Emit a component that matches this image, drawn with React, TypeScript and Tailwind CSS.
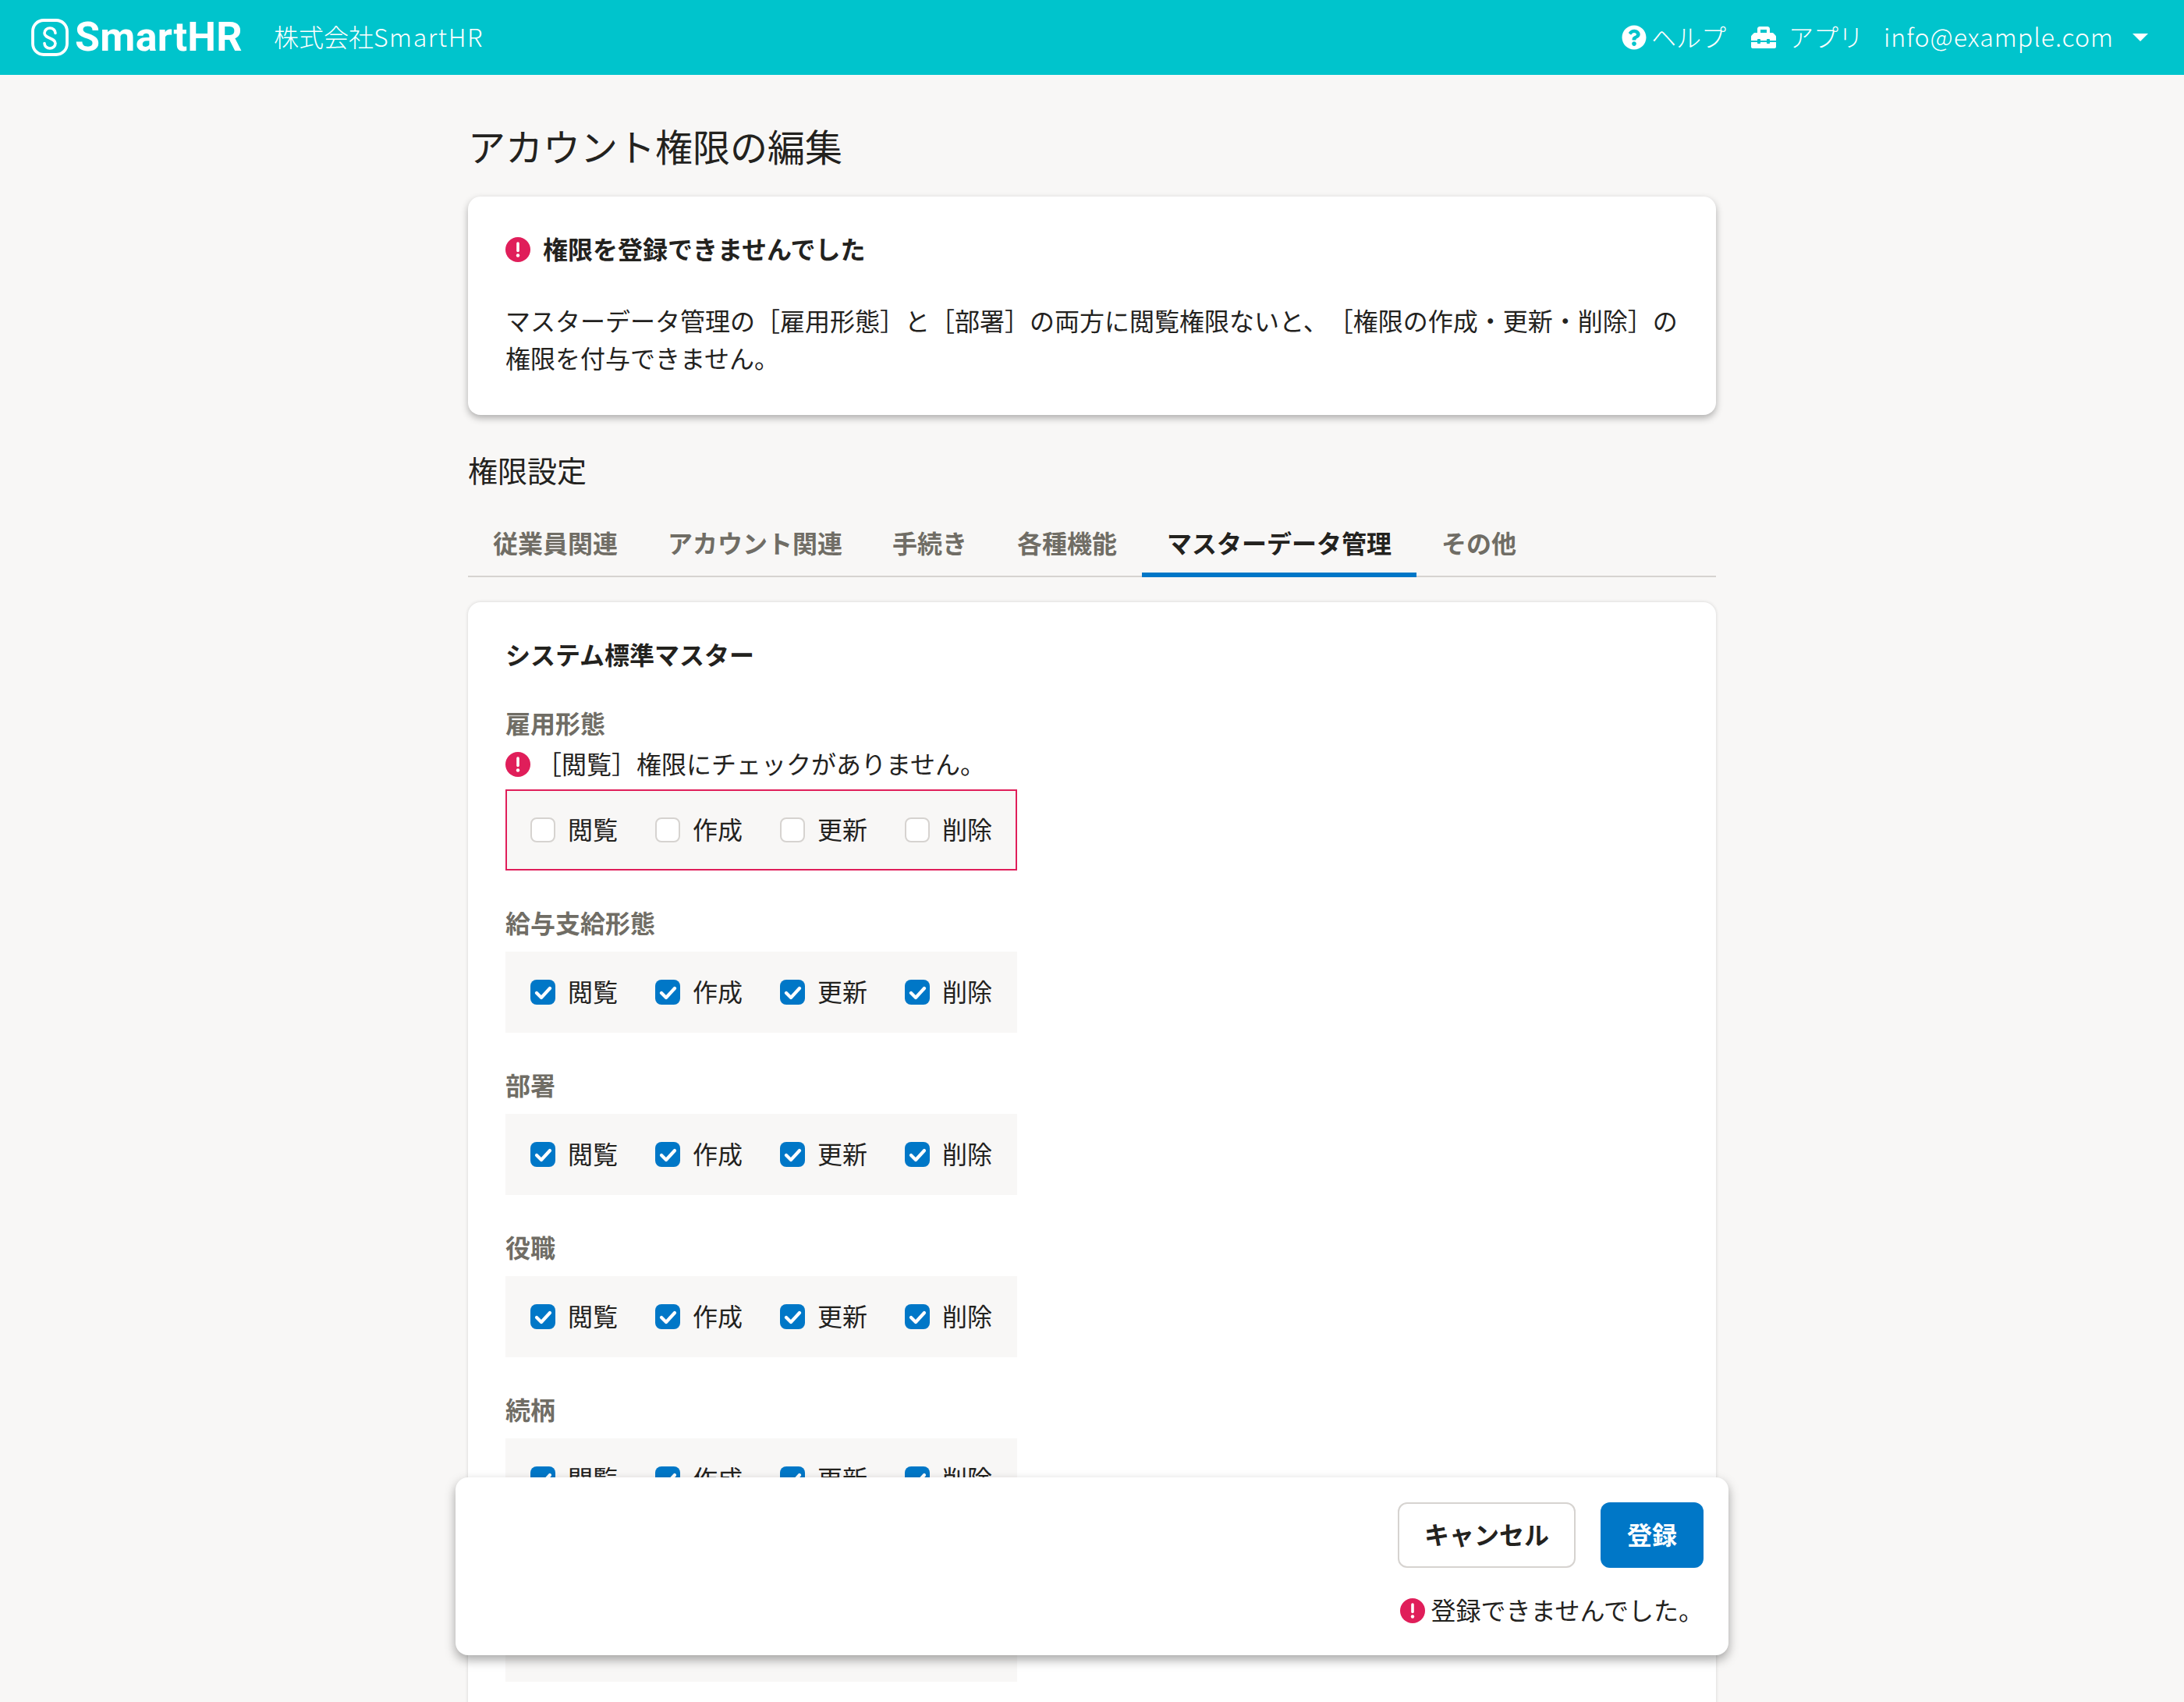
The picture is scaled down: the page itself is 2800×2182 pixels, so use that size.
import React from "react";
import { FaQuestionCircle, FaToolbox } from "react-icons/fa";

const JP = '"Noto Sans CJK JP", sans-serif';

function ErrorIcon() {
  return (
    <svg viewBox="0 0 32 32" className="w-8 h-8 shrink-0">
      <circle cx="16" cy="16" r="16" fill="#e01e5a" />
      <path d="M16 8v9.5" stroke="#fff" strokeWidth="3.6" strokeLinecap="round" />
      <circle cx="16" cy="23.5" r="2.2" fill="#fff" />
    </svg>
  );
}

function Check({ label, on }: { label: string; on: boolean }) {
  return (
    <label className="flex items-center gap-4 h-8">
      {on ? (
        <span className="flex w-8 h-8 items-center justify-center rounded-lg bg-[#0077c7]">
          <svg viewBox="0 0 32 32" className="w-8 h-8" fill="none">
            <path d="M8 17l6 6L25 11" stroke="#fff" strokeWidth="4.2" strokeLinecap="round" strokeLinejoin="round" />
          </svg>
        </span>
      ) : (
        <span className="block w-8 h-8 rounded-lg border-2 border-[#d6d3d0] bg-white" />
      )}
      <span className="text-[32px] leading-10 pb-1 w-16 text-[#23221e]">{label}</span>
    </label>
  );
}

function Group({ on }: { on: boolean }) {
  return (
    <div className="flex gap-12">
      {["閲覧", "作成", "更新", "削除"].map((l) => (
        <Check key={l} label={l} on={on} />
      ))}
    </div>
  );
}

function Section({ title, tall }: { title: string; tall?: boolean }) {
  return (
    <section className="mt-12">
      <h3 className="h-10 text-[32px] leading-9 font-bold text-[#706d65] mb-4">{title}</h3>
      <div className={`w-[656px] bg-[#f8f7f6] px-8 py-9 ${tall ? "h-[312px]" : "h-[104px]"}`}>
        <Group on />
      </div>
    </section>
  );
}

const tabs = ["従業員関連", "アカウント関連", "手続き", "各種機能", "マスターデータ管理", "その他"];

export default function App() {
  return (
    <div className="relative h-[2182px] overflow-hidden bg-[#f8f7f6] text-[#23221e]" style={{ fontFamily: JP }}>
      <header className="flex h-24 items-center justify-between bg-[#00c4cc] pl-10 pr-[46px] text-white">
        <div className="flex items-center">
          <svg viewBox="0 0 48 48" className="w-12 h-12" fill="none" stroke="#fff">
            <rect x="2" y="2" width="44" height="44" rx="14" strokeWidth="3.8" />
            <path d="M31 18.5a7 6.5 0 0 0-14 0c0 3.5 3.5 5 7 6.5s7 3 7 6.5a7 6.5 0 0 1-14 0" strokeWidth="3.6" strokeLinecap="round" />
          </svg>
          <span className="ml-[8px] text-[52px] leading-none font-bold tracking-[0.3px]" style={{ fontFamily: "Roboto, sans-serif" }}>SmartHR</span>
          <span className="ml-10 pb-1 text-[32px] leading-10 font-light">株式会社<span className="tracking-[1.6px]">SmartHR</span></span>
        </div>
        <div className="flex items-center text-[32px] leading-10 font-light">
          <FaQuestionCircle className="w-8 h-8" />
          <span className="ml-[6px] pb-1">ヘルプ</span>
          <FaToolbox className="w-8 h-8 ml-8" />
          <span className="ml-4 pb-1">アプリ</span>
          <span className="ml-[26px] pb-1 tracking-[1.05px]">info@example.com</span>
          <svg viewBox="0 0 20 10" className="ml-6 w-5 h-[10px]"><path d="M0 0h20L10 10z" fill="#fff" /></svg>
        </div>
      </header>

      <main className="mx-auto w-[1600px]">
        <h1 className="mt-[60px] mb-9 text-[48px] leading-[60px]">アカウント権限の編集</h1>

        <div className="rounded-2xl bg-white p-12 shadow-[0_4px_10px_rgba(0,0,0,0.3)]">
          <div className="flex items-center gap-4 h-10 mb-[46px]">
            <ErrorIcon />
            <h2 className="pb-1 text-[32px] leading-10 font-bold">権限を登録できませんでした</h2>
          </div>
          <p className="pb-[2px] text-[32px] leading-12 [text-spacing-trim:space-all]">
            マスターデータ管理の［雇用形態］と［部署］の両方に閲覧権限ないと、［権限の作成・更新・削除］の権限を付与できません。
          </p>
        </div>

        <h2 className="mt-[50px] mb-[50px] text-[38px] leading-10">権限設定</h2>

        <nav className="flex border-b-2 border-[#d6d3d0]">
          {tabs.map((t, i) => (
            <div
              key={t}
              className={`-mb-[2px] h-[68px] border-b-[6px] px-8 pt-[3px] text-[32px] leading-10 font-bold ${i === 4 ? "border-[#0077c7] text-[#23221e]" : "border-transparent text-[#706d65]"}`}
            >
              {t}
            </div>
          ))}
        </nav>

        <div className="mt-8 rounded-t-2xl bg-white px-12 pt-12 h-[1500px] shadow-[0_0_4px_rgba(0,0,0,0.15)]">
          <h2 className="h-10 text-[32px] leading-9 font-bold">システム標準マスター</h2>

          <section className="mt-12">
            <h3 className="h-10 text-[32px] leading-9 font-bold text-[#706d65] mb-4">雇用形態</h3>
            <div className="flex items-center gap-2 h-8 mb-4">
              <ErrorIcon />
              <span className="pb-1 text-[32px] leading-10">［閲覧］権限にチェックがありません。</span>
            </div>
            <div className="w-[656px] h-[104px] border-2 border-[#e01e5a] bg-[#f8f7f6] px-[30px] py-[34px]">
              <Group on={false} />
            </div>
          </section>

          <Section title="給与支給形態" />
          <Section title="部署" />
          <Section title="役職" />
          <Section title="続柄" tall />
        </div>
      </main>

      <div className="absolute left-[584px] top-[1894px] w-[1632px] h-[228px] rounded-2xl bg-white p-8 shadow-[0_6px_14px_rgba(0,0,0,0.35)]">
        <div className="flex justify-end gap-8">
          <button className="h-[84px] w-[228px] pb-1 rounded-xl border-2 border-[#d6d3d0] bg-white text-[32px] font-bold text-[#23221e]">キャンセル</button>
          <button className="h-[84px] w-[132px] pb-1 rounded-xl bg-[#0077c7] text-[32px] font-bold text-white">登録</button>
        </div>
        <div className="mt-[39px] flex items-center justify-end gap-2 h-8">
          <ErrorIcon />
          <span className="pb-1 text-[32px] leading-10">登録できませんでした。</span>
        </div>
      </div>
    </div>
  );
}
